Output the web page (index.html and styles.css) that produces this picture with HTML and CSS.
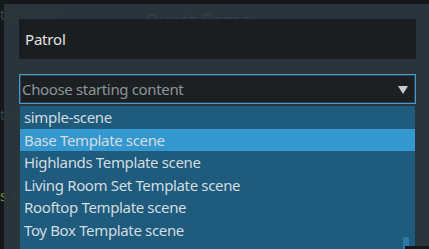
FILE: index.html
```html
<!DOCTYPE html>
<html lang="en">
<head>
  <meta charset="UTF-8" />
  <title>New Scene</title>
  <link rel="stylesheet" href="styles.css">
</head>
<body>
  <div class="backdrop">
    <span class="bg-text bg-one">tas image</span>
    <span class="bg-text bg-two">tas</span>
    <span class="bg-text bg-three">s v</span>
  </div>
  <div class="dialog">
    <span class="ghost">Quest Demo</span>
    <div class="name-field">Patrol</div>
    <div class="select">
      <span class="placeholder">Choose starting content</span>
      <span class="arrow"></span>
    </div>
    <ul class="options">
      <li>simple-scene</li>
      <li class="active">Base Template scene</li>
      <li>Highlands Template scene</li>
      <li>Living Room Set Template scene</li>
      <li>Rooftop Template scene</li>
      <li>Toy Box Template scene</li>
    </ul>
    <div class="thumb"></div>
  </div>
  <div class="corner"></div>
</body>
</html>
```
FILE: styles.css
```css
body {
  margin: 0;
  width: 429px;
  height: 249px;
  overflow: hidden;
  background: #13181b;
  font-family: 'Noto Sans', sans-serif;
  position: relative;
}

.backdrop {
  position: absolute;
  inset: 0;
}

.bg-text {
  position: absolute;
  font-size: 14px;
  letter-spacing: -0.3px;
  color: #3b4449;
}

.bg-one { left: 0; top: 5px; }
.bg-two { left: 0; top: 105px; }
.bg-three { left: 0; top: 186px; color: #7f8a2a; }

.dialog {
  position: absolute;
  left: 4px;
  top: 4px;
  right: 0;
  bottom: 0;
  background: rgba(44, 54, 60, 0.96);
  padding: 15px 13px 0 15px;
}

.ghost {
  position: absolute;
  left: 141px;
  top: 4px;
  font-size: 18px;
  color: #353f45;
}

.name-field {
  position: relative;
  height: 40px;
  background: #1a1e21;
  color: #e2e4e5;
  font-size: 15px;
  letter-spacing: -0.2px;
  line-height: 40px;
  padding-left: 6px;
}

.select {
  position: relative;
  margin-top: 15px;
  height: 28px;
  border: 1px solid #3d9bd6;
  box-shadow: inset 0 0 0 1px #3a4247;
  background: #1c2023;
  display: flex;
  align-items: center;
  justify-content: space-between;
  padding: 0 7px 0 2px;
}

.placeholder {
  color: #8b949a;
  font-size: 15px;
  letter-spacing: -0.35px;
}

.arrow {
  width: 0;
  height: 0;
  margin-top: 1px;
  border-left: 5px solid transparent;
  border-right: 5px solid transparent;
  border-top: 8px solid #c9ccce;
}

.options {
  list-style: none;
  margin: 2px 1px 0 1px;
  padding: 0;
  background: #1e5b7c;
  height: 150px;
}

.options li {
  height: 22.6px;
  line-height: 22px;
  padding-left: 4px;
  color: #d3dce1;
  font-size: 15px;
  letter-spacing: -0.35px;
}

.options li.active {
  background: #3497cf;
}

.thumb {
  position: absolute;
  left: 399px;
  top: 233px;
  width: 6px;
  height: 14px;
  background: #2a7aa8;
  border-radius: 2px;
}

.corner {
  position: absolute;
  right: 0;
  bottom: 0;
  width: 24px;
  height: 3px;
  background: #13181b;
}
```
